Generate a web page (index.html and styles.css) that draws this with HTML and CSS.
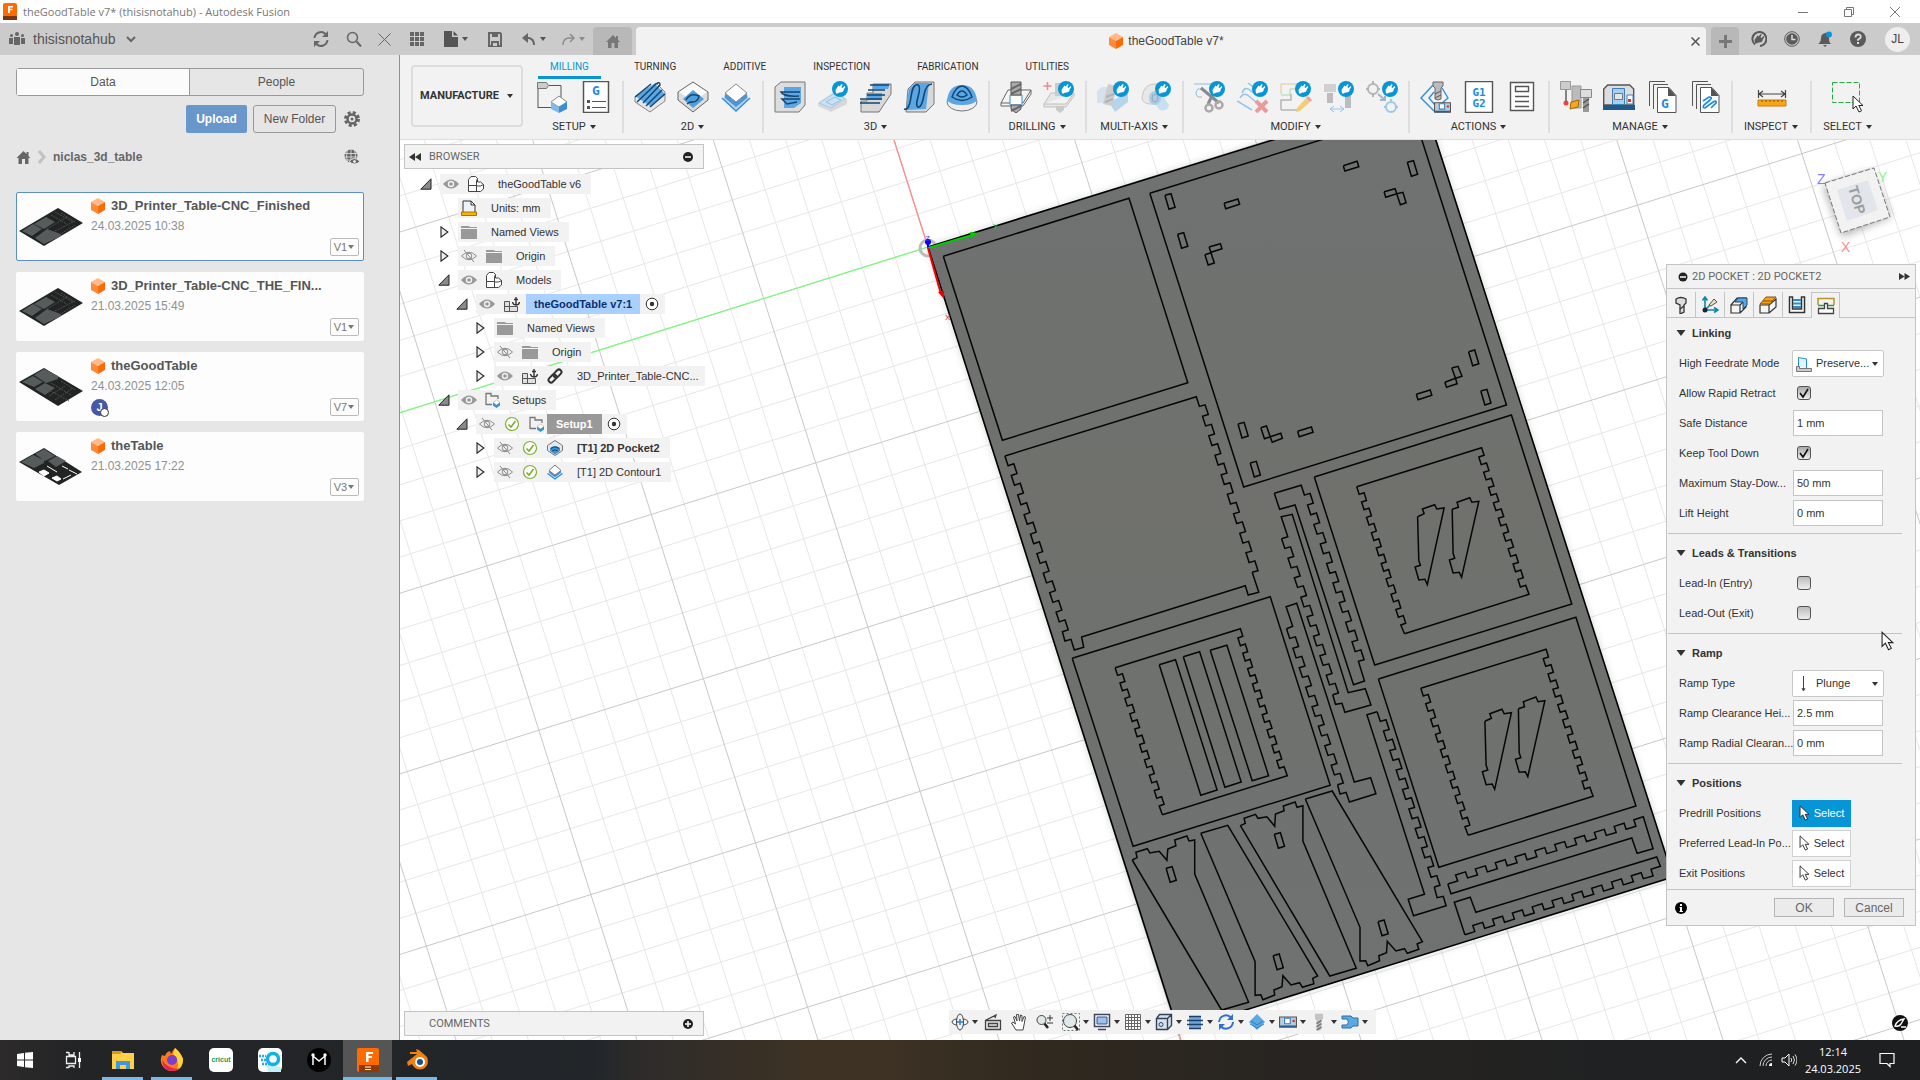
FILE: index.html
```html
<!DOCTYPE html>
<html lang="en">
<head>
<meta charset="utf-8">
<title>theGoodTable v7* (thisisnotahub) - Autodesk Fusion</title>
<link rel="stylesheet" href="styles.css">
</head>
<body>
<svg class="sprite" aria-hidden="true">
  <symbol id="cube" viewBox="0 0 14 16"><path d="M7 0 14 4 7 8 0 4z" fill="#ffb98a"/><path d="M0 4 7 8v8l-7-4z" fill="#ff8a3c"/><path d="M14 4 7 8v8l7-4z" fill="#ff6a00"/></symbol>
  <symbol id="caret" viewBox="0 0 8 8"><path d="M1 2h6L4 6z" fill="currentColor"/></symbol>
  <symbol id="house" viewBox="0 0 14 14"><path d="M7 1 0 8h2v6h3.500V9h3v5H12V8h2l-2-2V2h-2v2z" fill="currentColor"/></symbol>
  <symbol id="eye" viewBox="0 0 16 16"><path d="M0 8Q8-1 16 8 8 17 0 8z" fill="#999"/><circle cx="8" cy="8" r="3.200" fill="#f2f2f2"/><circle cx="8" cy="8" r="1.800" fill="#999"/></symbol>
  <symbol id="eyeoff" viewBox="0 0 16 16"><path d="M.5 8Q8 .5 15.500 8 8 15.500.5 8zM3 2l10 12" fill="none" stroke="#8a8a8a"/><circle cx="8" cy="8" r="2.800" fill="none" stroke="#8a8a8a"/></symbol>
  <symbol id="folder" viewBox="0 0 16 14"><path d="M0 1h8l1 1h7v12H0z" fill="#999"/><path d="M0 3.500h16" stroke="#f2f2f2"/></symbol>
  <symbol id="bodies" viewBox="0 0 16 16"><path d="M.5 15.500V3.500L3 .5h4.500l2 2V6h3L15.500 8.500V13l-3 2.500zM.5 9.500h8M8.500 15.500V5l1-2.500M8.500 10h4l3-1.500" fill="#fff" stroke="#444"/></symbol>
  <symbol id="anchored" viewBox="0 0 16 16"><path d="M.5 5.500h5v10h-5zM5.500 10.500h8v5h-8zM.5 10.500h5" fill="#e0e0e0" stroke="#555"/><path d="M12 1v8M8.500 6q.5 3 3.500 3t3.500-3M10 3.500h4" fill="none" stroke="#333" stroke-width="1.400"/></symbol>
  <symbol id="setup" viewBox="0 0 16 16"><path d="M1 13V1.500h5V4h7v3M1 12.500h6" fill="none" stroke="#777" stroke-width="1.300"/><path d="M11.500 8 15 10.500 11.500 13 8 10.500z" fill="#fff" stroke="#999" stroke-width=".5"/><path d="M8 10.500v3l3.500 2.500 3.500-2.500v-3L11.500 13z" fill="#3a8fd6"/></symbol>
  <symbol id="okay" viewBox="0 0 16 16"><circle cx="8" cy="8" r="6.500" fill="#fff" stroke="#7fae2e" stroke-width="1.200"/><path d="M4.500 8.500 7 11l4.500-6" fill="none" stroke="#7fae2e" stroke-width="1.600"/></symbol>
  <symbol id="closedtri" viewBox="0 0 12 14"><path d="M2.500 1 10.500 7l-8 6z" fill="#eee" stroke="#222" stroke-width="1.300"/></symbol>
  <symbol id="opentri" viewBox="0 0 12 12"><path d="M11 .8V11.200H.8z" fill="#8a8a8a" stroke="#222"/></symbol>
  <symbol id="radio" viewBox="0 0 14 14"><circle cx="7" cy="7" r="5.800" fill="#fff" stroke="#333"/><circle cx="7" cy="7" r="2.200" fill="#333"/></symbol>
  <symbol id="pocket" viewBox="0 0 32 32"><path d="M16 1 31 11v8L16 31 1 19v-8z" fill="#ddd" stroke="#666"/><path d="M16 2 30 11 16 21 2 11z" fill="#fafafa"/><path d="M6 18 16 9l11 9-11 9z" fill="#4f9fdd"/><path d="M9 19q4-8 13-4-1 7-9 6l-3 2" fill="none" stroke="#12466f" stroke-width="1.500"/></symbol>
  <symbol id="contour" viewBox="0 0 32 32"><path d="M4 14v4l12 11 12-11v-4L16 24z" fill="#b9cfe4"/><path d="M5 12v5l11 9 11-9v-5L16 21z" fill="#4a96d6"/><path d="M16 3 27 12 16 21 5 12z" fill="#fff" stroke="#888"/><path d="M2 17l14 13 14-13" fill="none" stroke="#2f8ee0" stroke-width="1.500"/></symbol>
  <symbol id="pocketsm" viewBox="0 0 16 16"><path d="M8 .5 15.500 5.500v5L8 15.500.5 10.500v-5z" fill="#e8e8e8" stroke="#777"/><path d="M3 8q5-4 10 0v3l-5 3.500L3 11z" fill="#3f93d8"/><path d="M4 8.500q4-3 8 0M5.500 11q2.500-2 5 0" fill="none" stroke="#12466f" stroke-width="1.200"/></symbol>
  <symbol id="contoursm" viewBox="0 0 16 16"><path d="M2 6v3l6 4.500L14 9V6l-6 5z" fill="#4a96d6"/><path d="M8 1 14 6.500 8 11 2 6.500z" fill="#fff" stroke="#777"/><path d="M.5 9.500 8 15l7.500-5.500" fill="none" stroke="#2f8ee0" stroke-width="1.400"/></symbol>
  <symbol id="plug" viewBox="0 0 16 16"><circle cx="8" cy="8" r="8" fill="#0696d7"/><path d="M4 12.500 3.500 9l3-4.500 1.200 1L9.500 3l1.200.8-1.300 2.400 1.300.8L12.500 5l.8 1-1.600 2.500q0 3-3.700 3-1.500 0-2.500 1z" fill="#fff"/></symbol>
  <symbol id="pointer" viewBox="0 0 12 18"><path d="M1 1v13l3-3 3 6 2.500-1.200L6.800 10.500H11z" fill="#fff" stroke="#222"/></symbol>
  <symbol id="machine" viewBox="0 0 16 11"><path d="M.5 1.500h15v9H.5z" fill="#b8cde0" stroke="#555"/><path d="M5 2.500h5v5H5z" fill="#fff" stroke="#3f7fb8"/><path d="M12 4h2v2h-2z" fill="#d33"/><path d="M1 9h14v1.500H1z" fill="#2c5d8a"/></symbol>
  <symbol id="drill" viewBox="0 0 10 22"><path d="M0 1h10v6l-2 2v11l-3 2-3-2V9L0 7z" fill="#c4c4c4"/><path d="M2 13l6-4M2 17l6-4M2 21l6-4" stroke="#777" stroke-width="2"/></symbol>
  <symbol id="sheet" viewBox="0 0 32 32"><path d="M3.500 25V.5H19M7.500 28V3.500H22" fill="none" stroke="#555"/><path d="M11.500 6.500H23l7 8v17H11.500z" fill="#fff" stroke="#555"/><path d="M22 6l8 9h-8z" fill="#555"/></symbol>
  <symbol id="boardleft" viewBox="0 0 68 67"><path d="M2 38 41 15l25 15-39 23z" fill="#222424"/><path d="M5 38l11-7 9 5-10 7zM17 31l12-7 9 5-11 7zM18 45l12-9 14 5v2L27 51z" fill="#565b5b"/><path d="M34 22l16 9M38 19l18 10M30 36l20-12M42 42l16-10M44 20l14 9M38 38l20-10" stroke="#4c5050" stroke-width="1" stroke-dasharray="2 1"/></symbol>
</svg>

<header class="titlebar">
  <svg class="appicon" viewBox="0 0 14 17"><rect width="14" height="17" rx="2" fill="#ff6b00"/><rect y="13" width="14" height="4" fill="#7a3510"/><path d="M5 10V3h5v1.500H6.800v1.300h2.700v1.500H6.800V10z" fill="#fff"/></svg>
  <h1>theGoodTable v7* (thisisnotahub) - Autodesk Fusion</h1>
  <div class="winbtns">
    <button aria-label="Minimize"><svg viewBox="0 0 10 10"><path d="M0 5.500h10"/></svg></button>
    <button aria-label="Restore"><svg viewBox="0 0 10 10"><path d="M.5 2.500h7v7h-7zM2.500 2.500v-2h7v7h-2"/></svg></button>
    <button aria-label="Close"><svg viewBox="0 0 10 10"><path d="M0 0l10 10M10 0 0 10"/></svg></button>
  </div>
</header>

<div class="appbar">
  <div class="hub">
    <button class="hubname"><svg width="16" height="14" viewBox="0 0 16 14"><g fill="#666"><circle cx="8" cy="2" r="2"/><path d="M5 5h6v8H5z"/><circle cx="2.500" cy="3.500" r="1.500"/><path d="M0 6h4v6H0z"/><circle cx="13.500" cy="3.500" r="1.500"/><path d="M12 6h4v6h-4z"/></g></svg><span>thisisnotahub</span><svg class="chev" width="10" height="8" viewBox="0 0 10 8"><path d="M1 2l4 4 4-4" fill="none" stroke="#666" stroke-width="2"/></svg></button>
    <button aria-label="Refresh"><svg width="18" height="18" viewBox="0 0 18 18"><path d="M2.500 8a6.500 6.500 0 0 1 11-4M15.500 10a6.500 6.500 0 0 1-11 4" fill="none" stroke="#666" stroke-width="2"/><path d="M16 1v6h-6zM2 17v-6h6z" fill="#666"/></svg></button>
    <button aria-label="Search"><svg width="16" height="16" viewBox="0 0 16 16"><path d="M10.500 10.500 15 15.500" stroke="#666" stroke-width="2"/><circle cx="6.500" cy="6.500" r="5" fill="none" stroke="#666" stroke-width="1.500"/></svg></button>
    <button aria-label="Close data panel"><svg width="13" height="13" viewBox="0 0 13 13"><path d="M.5.5l12 12M12.500.5l-12 12" stroke="#666"/></svg></button>
  </div>
  <div class="quick">
    <button aria-label="Show data panel"><svg width="14" height="14" viewBox="0 0 14 14"><path d="M0 0h4v4H0zM5 0h4v4H5zM10 0h4v4h-4zM0 5h4v4H0zM5 5h4v4H5zM10 5h4v4h-4zM0 10h4v4H0zM5 10h4v4H5zM10 10h4v4h-4z" fill="#666"/></svg></button>
    <button class="wide" aria-label="File"><svg width="14" height="16" viewBox="0 0 14 16"><path d="M0 0h8v6h6v10H0zM9.500 0 14 4.500H9.500z" fill="#555"/></svg><svg class="car"><use href="#caret"/></svg></button>
    <button aria-label="Save"><svg width="14" height="15" viewBox="0 0 14 15"><path d="M1 1h11l1 1v12H1z" fill="none" stroke="#666" stroke-width="2"/><path d="M4 1h6v4H4zM3 9h8v5H3z" fill="#666"/><path d="M5 11h4v3H5z" fill="#cbcbcb"/></svg></button>
    <button class="wide" aria-label="Undo"><svg width="14" height="14" viewBox="0 0 14 14"><path d="M2 6h5q5 1 5 7" fill="none" stroke="#666" stroke-width="2"/><path d="M0 6l6-5v10z" fill="#666"/></svg><svg class="car"><use href="#caret"/></svg></button>
    <button class="wide dim" aria-label="Redo"><svg width="14" height="14" viewBox="0 0 14 14"><path d="M12 6H7Q2 7 2 13" fill="none" stroke="#8c8c8c" stroke-width="1.500"/><path d="M9 2l4 4-4 4" fill="none" stroke="#8c8c8c" stroke-width="1.500"/></svg><svg class="car"><use href="#caret"/></svg></button>
  </div>
  <button class="hometab" aria-label="Home"><svg width="14" height="14"><use href="#house"/></svg></button>
  <div class="doctab"><span class="docname"><svg width="14" height="16"><use href="#cube"/></svg>theGoodTable v7*</span><button aria-label="Close document"><svg width="9" height="9" viewBox="0 0 9 9"><path d="M.5.5l8 8M8.500.5l-8 8" stroke="#555" stroke-width="1.500"/></svg></button></div>
  <button class="newtab" aria-label="New document"><svg width="13" height="13" viewBox="0 0 13 13"><path d="M6.500 0v13M0 6.500h13" stroke="#777" stroke-width="3"/></svg></button>
  <div class="account">
    <button aria-label="Extensions"><svg width="16" height="16" viewBox="0 0 16 16"><path d="M4 13.500A7 7 0 1 1 9 15" fill="none" stroke="#5a5a5a" stroke-width="2"/><path d="M4 12.500 3.500 9l3-4.500 1.200 1L9.500 3l1.200.8-1.300 2.400 1.300.8L12.500 5l.8 1-1.600 2.500q0 3-3.700 3-1.500 0-2.500 1z" fill="#5a5a5a"/></svg></button>
    <button aria-label="Job status"><svg width="16" height="16" viewBox="0 0 16 16"><circle cx="8" cy="8" r="7.300" fill="none" stroke="#5a5a5a"/><circle cx="8" cy="8" r="5.800" fill="#5a5a5a"/><path d="M8 4v4.500h3.500" fill="none" stroke="#ddd" stroke-width="1.500"/></svg></button>
    <button aria-label="Notifications"><svg width="16" height="16" viewBox="0 0 16 16"><path d="M1 13q3-2 3-6t4-5 4 5 3 6zM6 14h4l-2 2z" fill="#5a5a5a"/><circle cx="12" cy="3.500" r="3" fill="#0696d7"/></svg></button>
    <button aria-label="Help"><svg width="16" height="16" viewBox="0 0 16 16"><circle cx="8" cy="8" r="8" fill="#5a5a5a"/><path d="M5.500 6.500q0-3 2.700-3t2.600 2.300Q10.500 7.500 8 8.500v1.200" fill="none" stroke="#ddd" stroke-width="1.800"/><path d="M7 11h2v2H7z" fill="#ddd"/></svg></button>
    <button class="avatar">JL</button>
  </div>
</div>

<div class="main">
  <aside class="data">
    <div class="seg"><button class="on">Data</button><button>People</button></div>
    <div class="acts"><button class="upload">Upload</button><button class="newfolder">New Folder</button>
      <button class="bare" aria-label="Settings"><svg width="16" height="16" viewBox="0 0 16 16"><circle cx="8" cy="8" r="6.500" fill="none" stroke="#666" stroke-width="3" stroke-dasharray="3 2.100"/><circle cx="8" cy="8" r="4.500" fill="none" stroke="#666" stroke-width="2.500"/><circle cx="8" cy="8" r="1.500" fill="#666"/></svg></button></div>
    <div class="crumbs"><svg width="15" height="14"><use href="#house"/></svg><svg width="8" height="14" viewBox="0 0 8 14"><path d="M1 1l5 6-5 6" fill="none" stroke="#c2c2c2" stroke-width="3"/></svg><a href="#">niclas_3d_table</a>
      <button class="bare" aria-label="Open on the web"><svg width="16" height="16" viewBox="0 0 16 16"><circle cx="7" cy="7" r="6.500" fill="#666"/><path d="M0 4.500h14M0 8h14M0 11h14M7 0v14M3.500 0q-2 7 0 14M10.500 0q2 7 0 14" stroke="#e6e6e6" stroke-width=".8" fill="none"/><path d="M5 12.500q5.500-6 11 0-5.500 5-11 0z" fill="#666" stroke="#e6e6e6"/><circle cx="10.500" cy="12.500" r="1.300" fill="#fff"/></svg></button></div>
    <ul class="files">
      <li class="sel"><svg class="thumb"><use href="#boardleft"/></svg>
        <div class="info"><strong><svg width="14" height="16"><use href="#cube"/></svg>3D_Printer_Table-CNC_Finished</strong><time>24.03.2025 10:38</time></div><button class="ver">V1<svg class="car"><use href="#caret"/></svg></button></li>
      <li><svg class="thumb"><use href="#boardleft"/></svg>
        <div class="info"><strong><svg width="14" height="16"><use href="#cube"/></svg>3D_Printer_Table-CNC_THE_FIN...</strong><time>21.03.2025 15:49</time></div><button class="ver">V1<svg class="car"><use href="#caret"/></svg></button></li>
      <li><svg class="thumb" viewBox="0 0 68 67"><path d="M2 29 27 15l39 23-25 15z" fill="#222424"/><path d="M5 29l11-6 10 6-9 5zM17 22l10-6 14 7v3l-12 4zM18 36l10-6 10 5-10 7z" fill="#565b5b"/><path d="M32 43l16-10M38 47l18-12M34 30l20 12M44 28l14 9M30 36l22 12" stroke="#4c5050" stroke-width="1" stroke-dasharray="2 1"/></svg>
        <div class="info"><strong><svg width="14" height="16"><use href="#cube"/></svg>theGoodTable</strong><time>24.03.2025 12:05</time><span class="who">J</span></div><button class="ver">V7<svg class="car"><use href="#caret"/></svg></button></li>
      <li><svg class="thumb" viewBox="0 0 68 67"><path d="M2 29 27 15l38 24-23 13z" fill="#222424"/><path d="M4 29l12-7 11 5v3l-10 5zM18 21l9-5 11 7-10 5zM31 28l9-5 9 5-10 6z" fill="#565b5b"/><path d="M22 39l5-2 5 3-5 3zM35 45l5-2 4 3-4 2zM45 33l6 3M46 46l8-4" fill="#fff" stroke="#fff"/><path d="M30 33l10 6M52 37l8 4" stroke="#fff"/></svg>
        <div class="info"><strong><svg width="14" height="16"><use href="#cube"/></svg>theTable</strong><time>21.03.2025 17:22</time></div><button class="ver">V3<svg class="car"><use href="#caret"/></svg></button></li>
    </ul>
  </aside>

  <section class="work">
    <div class="ribbon">
      <button class="space">MANUFACTURE<svg class="car"><use href="#caret"/></svg></button>
      <div class="tools">
        <nav class="tabs"><a class="on" href="#">MILLING</a><a href="#">TURNING</a><a href="#">ADDITIVE</a><a href="#">INSPECTION</a><a href="#">FABRICATION</a><a href="#">UTILITIES</a></nav>
        <div class="groups">
          <div class="group"><div class="icons">
            <svg viewBox="0 0 32 32"><path d="M1 27V3M1 26.500h16M12 4.500h12V17" fill="none" stroke="#555"/><path d="M.5 1.500h9l2 3-2 3h-9z" fill="#ccc" stroke="#777"/><path d="M22 15l8 6-8 5-8-5z" fill="#fff" stroke="#888"/><path d="M14 21v7l8 4v-6z" fill="#7db9ea"/><path d="M30 21v7l-8 4v-6z" fill="#3c8fd4"/></svg>
            <svg viewBox="0 0 32 32"><path d="M3.500.5h25v31h-25z" fill="#fff" stroke="#555" stroke-width="1.500"/><path d="M7 19h3v3H7zM7 25h3v3H7z" fill="#555"/><path d="M12 20.500h14M12 26.500h14" stroke="#555"/><text x="16" y="14" class="gfont">G</text></svg>
          </div><button>SETUP<svg class="car"><use href="#caret"/></svg></button></div>
          <div class="group"><div class="icons">
            <svg viewBox="0 0 32 32"><path d="M1 16 22 2l9 9v9L16 31 1 21z" fill="#e6e6e6" stroke="#888"/><path d="M1 15 21 3l10 10-15 12z" fill="#5ba6e4"/><path d="M3 21 22 3q4-3 4 1L9 22M12 25 28 9M16 26 31 13M1 16 17 3" fill="none" stroke="#12466f" stroke-width="1.500"/></svg>
            <svg><use href="#pocket"/></svg><svg><use href="#contour"/></svg>
          </div><button>2D<svg class="car"><use href="#caret"/></svg></button></div>
          <div class="group"><div class="icons">
            <svg viewBox="0 0 32 32"><path d="M1 31V6l6-5h24v23l-6 7z" fill="#ddd" stroke="#777"/><path d="M10 6h17v16l-7 5H10z" fill="#5ba6e4"/><path d="M26 11H7q3 5 18 4M26 18H8l5 5 10-2" fill="none" stroke="#12466f" stroke-width="1.500"/></svg>
            <svg viewBox="0 0 32 32"><path d="M1 22 18 10l12 8v5L14 31 1 25z" fill="#d8d8d8"/><path d="M2 22 18 12l10 6-14 9z" fill="#c7e1f5" stroke="#a9c9e2"/><path d="M9 21l9-5 6 3-9 5z" fill="none" stroke="#9bbdd8"/><use href="#plug" x="15" width="16" height="16"/></svg>
            <svg viewBox="0 0 32 32"><path d="M1 31V20h6v-8h6V3h18v10l-12 18z" fill="#d8d8d8" stroke="#777"/><path d="M8 12h14v7H8zM13 3h17l-2 5H13z" fill="#5ba6e4"/><path d="M10 4h19M8 9h17M0 18h22M0 22h20M7 14h18" stroke="#12466f" stroke-width="1.600"/></svg>
            <svg viewBox="0 0 32 32"><path d="M3 31 5 8l7-7h19v22l-8 8z" fill="#d8d8d8" stroke="#777"/><path d="M3 29 6 8l6-6h14l-3 26z" fill="#5ba6e4"/><path d="M1 28q5 2 7-12T15 4q3 1 0 12t1 10q3-1 5-12t8-11" fill="none" stroke="#12466f" stroke-width="1.600"/></svg>
            <svg viewBox="0 0 32 32"><ellipse cx="16" cy="21" rx="15" ry="9" fill="#eee" stroke="#777"/><path d="M1 19Q3 4 16 4t15 15q-3 5-15 5T1 19z" fill="#5ba6e4"/><path d="M6 16q4-11 10-11t10 11q-10 7-20 0zM11 14q5-8 10 0-5 4-10 0z" fill="none" stroke="#12466f" stroke-width="1.500"/></svg>
          </div><button>3D<svg class="car"><use href="#caret"/></svg></button></div>
          <div class="group"><div class="icons">
            <svg viewBox="0 0 32 32"><path d="M1 22 8 9h23l-8 13zM1 22v3h22l8-12V9" fill="#f6f6f6" stroke="#666"/><path d="M10 14h12v10H10z" fill="#fff" stroke="#2f8ee0"/><path d="M11 1h10v13H11zM11 24h10v4l-5 4-5-4z" fill="#aaa" stroke="#555"/><path d="M11 8l10-5M11 13l10-5M11 30l10-5" stroke="#666" stroke-width="2"/></svg>
            <svg viewBox="0 0 32 32"><g opacity=".55"><path d="M1 23 8 12h23l-8 11zM1 23v3h22l8-11v-3" fill="#ddd" stroke="#999"/><path d="M12 2h8v13h-8zM13 25h8v4l-4 3-4-3z" fill="#aaa"/><path d="M4.500 1v8M.5 5h8" stroke="#e33" stroke-width="1.500"/></g><use href="#plug" x="15" width="16" height="16"/></svg>
          </div><button>DRILLING<svg class="car"><use href="#caret"/></svg></button></div>
          <div class="group"><div class="icons">
            <svg viewBox="0 0 32 32"><g opacity=".6"><path d="M0 10h12v12H0zM12 21l19-9v9L18 31z" fill="#8fc2e8"/><path d="M0 10l5-4h12l-5 16H0" fill="#c5d9e8"/><path d="M11 3l9 2-5 20-9-2z" fill="#b5b5b5"/><path d="M9 16l8-3M8 21l8-3" stroke="#888" stroke-width="2"/></g><use href="#plug" x="16" width="16" height="16"/></svg>
            <svg viewBox="0 0 32 32"><g opacity=".6"><path d="M2 16Q4 2 16 3l6 6-8 14Q2 24 2 16z" fill="#e2e2e2" stroke="#aaa"/><path d="M10 17 19 10l10 14q-1 7-9 5z" fill="#a9d3f3"/><ellipse cx="15" cy="17" rx="6" ry="7" fill="#7fb4dc"/><ellipse cx="15" cy="17" rx="3" ry="4" fill="none" stroke="#4f7590"/></g><use href="#plug" x="15" width="16" height="16"/></svg>
          </div><button>MULTI-AXIS<svg class="car"><use href="#caret"/></svg></button></div>
          <div class="group"><div class="icons">
            <svg viewBox="0 0 32 32"><path d="M0 3h18M8 8H4q-4 4 0 8h4" fill="none" stroke="#8cbfe6"/><path d="M7 7l18 15M20 11l-6 12" stroke="#8a8a8a" stroke-width="3"/><circle cx="15" cy="27" r="3.500" fill="none" stroke="#aaa" stroke-width="2.500"/><circle cx="25" cy="24" r="3.500" fill="none" stroke="#aaa" stroke-width="2.500"/><use href="#plug" x="15" width="16" height="16"/></svg>
            <svg viewBox="0 0 32 32"><path d="M11 2l12 9M5 12q3-8 9-2l5 4M0 20l15 9M3 17q4-7 10-1l6 5" fill="none" stroke="#94c3e6" stroke-width="1.500"/><path d="M19 20l11 11M30 20 19 31" stroke="#ea9a9a" stroke-width="4"/><use href="#plug" x="15" width="16" height="16"/></svg>
            <svg viewBox="0 0 32 32"><path d="M1 3h30M1 3v10" fill="none" stroke="#dcc98e"/><path d="M1 14h9V8h6" fill="none" stroke="#a0dcae"/><path d="M1 29V19h10v-6M1 29h16" fill="none" stroke="#b5b5b5" stroke-width="1.500"/><path d="M17 27 26 17l4 4-10 9-4 1z" fill="#f3cd7a"/><path d="M26 17l2-2 4 4-2 2z" fill="#ee9c9c"/><use href="#plug" x="15" width="16" height="16"/></svg>
            <svg viewBox="0 0 32 32"><g opacity=".6"><path d="M1 3h12v8H1z" fill="#bbb"/><path d="M4 12h6v10H4zM22 15h6v12h-6z" fill="#999"/><path d="M8 28h12M11 25l-4 3 4 3M17 25l4 3-4 3" fill="none" stroke="#5aa7df"/></g><use href="#plug" x="15" width="16" height="16"/></svg>
            <svg viewBox="0 0 32 32"><g fill="none" stroke-width="2"><circle cx="7" cy="8" r="5" stroke="#b5b5b5"/><path d="M7 0v3M7 13v3M0 8h2M12 8h2" stroke="#b5b5b5"/><circle cx="25" cy="26" r="5" stroke="#9cc9e8"/><path d="M25 18v3M18 26h2M30 26h2" stroke="#9cc9e8"/><path d="M12 13l7 6m0-4v4h-5" stroke="#a5b5c0"/></g><use href="#plug" x="16" width="16" height="16"/></svg>
          </div><button>MODIFY<svg class="car"><use href="#caret"/></svg></button></div>
          <div class="group"><div class="icons">
            <svg viewBox="0 0 32 32"><path d="M13 4 1 17l13 13M14 11l-5 6 6 7M22 7l6 10-6 5" fill="none" stroke="#2f8ee0" stroke-width="1.400"/><path d="M13 1h10v4l-2 2v11l-3 1-3-1V7l-2-2z" fill="#bbb" stroke="#666"/><path d="M15 13l6-3M15 17l6-3" stroke="#555"/><use href="#machine" x="14" y="20" width="17" height="12"/></svg>
            <svg viewBox="0 0 32 32"><path d="M2.500.5h27v31h-27z" fill="#fff" stroke="#555" stroke-width="1.400"/><text x="16" y="15" class="gfont small">G1</text><text x="16" y="26" class="gfont small">G2</text></svg>
            <svg viewBox="0 0 32 32"><path d="M4.500 1.500h23v28h-23z" fill="#fff" stroke="#555" stroke-width="1.400"/><path d="M9.500 5.500h13v5h-13zM9 15.500h14M9 20.500h14M9 25.500h14" fill="none" stroke="#555" stroke-width="1.400"/></svg>
          </div><button>ACTIONS<svg class="car"><use href="#caret"/></svg></button></div>
          <div class="group"><div class="icons">
            <svg viewBox="0 0 32 32"><path d="M12 5h9v22h-9z" fill="#bbb" stroke="#999"/><path d="M.5.5h10v8H.5z" fill="#ccc" stroke="#999"/><path d="M6 9v12" stroke="#555" stroke-width="1.400"/><circle cx="6" cy="22" r="2.500" fill="#f04040"/><path d="M11 21l8-2-1 7-8 2z" fill="#f3a81d" stroke="#a06800"/><path d="M20.500 8.500h11v8h-11z" fill="#ddd" stroke="#888"/><path d="M23 17h6v14h-6z" fill="#999"/><path d="M23 22l6-4M23 27l6-4" stroke="#555" stroke-width="1.500"/></svg>
            <svg viewBox="0 0 32 32"><path d="M.7 24V8l4-4h22l4 4v16z" fill="#ddd" stroke="#555" stroke-width="1.400"/><path d="M0 24h32v5H0z" fill="#1f5a89"/><path d="M9.500 7.500h12v16h-12z" fill="#a8cff0" stroke="#3c80bd"/><path d="M11.500 12.500h8v6h-8z" fill="#e6e6e6" stroke="#777"/><path d="M24 14h6v9h-6z" fill="#fff" stroke="#3c80bd"/><path d="M25 18h3v3h-3z" fill="#d33"/></svg>
            <svg viewBox="0 0 32 32"><use href="#sheet" width="32" height="32"/><text x="19" y="27" class="gfont">G</text></svg>
            <svg viewBox="0 0 32 32"><use href="#sheet" width="32" height="32"/><path d="M14 20l6-4q4 0 1 3l-6 5q-2 3 1 3l8-6q4-2 3 1l-5 5" fill="none" stroke="#1b8be6" stroke-width="1.700"/></svg>
          </div><button>MANAGE<svg class="car"><use href="#caret"/></svg></button></div>
          <div class="group"><div class="icons">
            <svg viewBox="0 0 32 32"><path d="M2.500 9v8M29.500 9v8M3 13h26M7 10l-4 3 4 3M25 10l4 3-4 3" fill="none" stroke="#444" stroke-width="1.200"/><path d="M2 19h28v6H2z" fill="#f9a71a" stroke="#c97c00"/><path d="M6 19v2M10 19v2M14 19v2M18 19v2M22 19v2M26 19v2" stroke="#8a5200"/></svg>
          </div><button>INSPECT<svg class="car"><use href="#caret"/></svg></button></div>
          <div class="group last"><div class="icons">
            <svg viewBox="0 0 32 32"><path d="M.5 1.500h27v20H.5z" fill="none" stroke="#27a844" stroke-dasharray="5 2"/><use href="#pointer" x="20" y="14" width="12" height="18"/></svg>
          </div><button>SELECT<svg class="car"><use href="#caret"/></svg></button></div>
        </div>
      </div>
    </div>

    <div class="canvas">
      <svg class="scene" viewBox="400 140 1520 900" preserveAspectRatio="xMinYMin slice">
        <defs><linearGradient id="plate" x1="0" y1="0" x2="0" y2="1"><stop offset="0" stop-color="#6f7272"/><stop offset=".45" stop-color="#70716d"/><stop offset=".6" stop-color="#6f716f"/><stop offset="1" stop-color="#707272"/></linearGradient>
        <filter id="soft"><feGaussianBlur stdDeviation="4"/></filter></defs>
        <g id="grid"></g>
        <path d="M400 412.600 928 247" stroke="#7dfb7d" stroke-width="1.300"/><path d="M894 140 928 247M1178 1031l3 9" stroke="#ff8a8a" stroke-width="1.300"/>
        <path d="M928 247 1421 94 1673 877 1178 1031z" fill="#000" opacity=".18" filter="url(#soft)"/>
        <circle cx="928" cy="248" r="8" fill="none" stroke="#bbb" stroke-width="3"/>
        <path d="M928 247 1421 94 1673 877 1178 1031z" fill="url(#plate)" stroke="#000" stroke-width="1.600"/>
        <g id="parts"></g>
        <path d="M928 248 976 234" stroke="#0c0" stroke-width="2"/><path d="M970 232l9 1-8 5z" fill="#0c0"/>
        <path d="M928 248l13 46" stroke="#e00" stroke-width="2"/><path d="M938 292l6-1 0 8z" fill="#e00"/>
        <path d="M928 247v-7" stroke="#00f" stroke-width="2"/><circle cx="928" cy="242" r="3" fill="#00f"/>
        <text x="925" y="241" class="ax" fill="#33f">Z</text><text x="993" y="229" class="ax" fill="#2c2">Y</text><text x="945" y="320" class="ax" fill="#a33">X</text>
        <path d="M1823 186l49-15 19 46-49 20z" fill="#000" opacity=".3" filter="url(#soft)"/>
        <path d="M1825 183l49-15 16 49-49 16z" fill="#f2f2f2" stroke="#777" stroke-dasharray="5 2"/><path d="M1837 190l31-10 10 30-31 11z" fill="#e2e5e9"/>
        <text x="1857" y="205" class="top" transform="rotate(73 1857 200)">TOP</text>
        <text x="1817" y="184" class="cubeax" fill="#8080ff">Z</text><text x="1878" y="182" class="cubeax" fill="#8cf58c">Y</text><text x="1841" y="252" class="cubeax" fill="#ff8c8c">X</text>
      </svg>

      <div class="browser">
        <div class="bar"><svg width="12" height="8" viewBox="0 0 12 8"><path d="M6 0v8L0 4zM12 0v8L6 4z" fill="#333"/></svg><h2>BROWSER</h2><svg width="10" height="10" viewBox="0 0 10 10"><circle cx="5" cy="5" r="5" fill="#222"/><path d="M2 5h6" stroke="#fff" stroke-width="1.500"/></svg></div>
        <ul class="tree">
          <li class="l0"><svg class="tg"><use href="#opentri"/></svg><span class="it"><svg><use href="#eye"/></svg><svg><use href="#bodies"/></svg><b>theGoodTable v6</b></span></li>
          <li class="l1"><svg class="tg"></svg><span class="it"><svg viewBox="0 0 16 16"><path d="M2 1h8l4 4v9H2z" fill="#eef3f8" stroke="#333"/><path d="M10 1v4h4" fill="none" stroke="#333"/><path d="M.5 12h15v3.500H.5z" fill="#f7b500" stroke="#a87400"/></svg><b>Units: mm</b></span></li>
          <li class="l1"><svg class="tg"><use href="#closedtri"/></svg><span class="it"><svg><use href="#folder"/></svg><b>Named Views</b></span></li>
          <li class="l1"><svg class="tg"><use href="#closedtri"/></svg><span class="it"><svg><use href="#eyeoff"/></svg><svg><use href="#folder"/></svg><b>Origin</b></span></li>
          <li class="l1"><svg class="tg"><use href="#opentri"/></svg><span class="it"><svg><use href="#eye"/></svg><svg><use href="#bodies"/></svg><b>Models</b></span></li>
          <li class="l2"><svg class="tg"><use href="#opentri"/></svg><span class="it act"><svg><use href="#eye"/></svg><svg><use href="#anchored"/></svg><b class="blue">theGoodTable v7:1</b><svg class="rd"><use href="#radio"/></svg></span></li>
          <li class="l3"><svg class="tg"><use href="#closedtri"/></svg><span class="it"><svg><use href="#folder"/></svg><b>Named Views</b></span></li>
          <li class="l3"><svg class="tg"><use href="#closedtri"/></svg><span class="it"><svg><use href="#eyeoff"/></svg><svg><use href="#folder"/></svg><b>Origin</b></span></li>
          <li class="l3"><svg class="tg"><use href="#closedtri"/></svg><span class="it act"><svg><use href="#eye"/></svg><svg><use href="#anchored"/></svg><svg viewBox="0 0 16 16"><g fill="none" stroke="#333" stroke-width="2"><rect x="1" y="8" width="9" height="5" rx="2.500" transform="rotate(-45 5.500 10.500)"/><rect x="6" y="3" width="9" height="5" rx="2.500" transform="rotate(-45 10.500 5.500)"/></g></svg><b>3D_Printer_Table-CNC...</b></span></li>
          <li class="l1"><svg class="tg"><use href="#opentri"/></svg><span class="it setups"><svg><use href="#eye"/></svg><svg><use href="#setup"/></svg><b>Setups</b></span></li>
          <li class="l2"><svg class="tg"><use href="#opentri"/></svg><span class="it act"><svg><use href="#eyeoff"/></svg><svg><use href="#okay"/></svg><svg><use href="#setup"/></svg><b class="gray">Setup1</b><svg class="rd"><use href="#radio"/></svg></span></li>
          <li class="l3"><svg class="tg"><use href="#closedtri"/></svg><span class="it"><svg><use href="#eyeoff"/></svg><svg><use href="#okay"/></svg><svg><use href="#pocketsm"/></svg><b class="strong">[T1] 2D Pocket2</b></span></li>
          <li class="l3"><svg class="tg"><use href="#closedtri"/></svg><span class="it"><svg><use href="#eyeoff"/></svg><svg><use href="#okay"/></svg><svg><use href="#contoursm"/></svg><b>[T1] 2D Contour1</b></span></li>
        </ul>
      </div>

      <div class="comments"><h2>COMMENTS</h2><svg width="10" height="10" viewBox="0 0 10 10"><circle cx="5" cy="5" r="5" fill="#222"/><path d="M2 5h6M5 2v6" stroke="#fff" stroke-width="1.500"/></svg></div>

      <div class="navbar">
        <button aria-label="Orbit"><svg viewBox="0 0 18 18"><ellipse cx="9" cy="9" rx="8" ry="3.500" fill="none" stroke="#444"/><ellipse cx="9" cy="9" rx="3.500" ry="8" fill="#f2f2f2" stroke="#444"/><path d="M9 6v6M6 9h6" stroke="#2c7fd0" stroke-width="1.500"/></svg><svg class="car"><use href="#caret"/></svg></button>
        <button class="plain" aria-label="Look at"><svg viewBox="0 0 18 18"><path d="M1.500 7.500h15v9h-15zM4.500 10.500h9v3h-9zM2 7l10-5-1 3" fill="#e5e5e5" stroke="#444" stroke-width="1.300"/></svg></button>
        <button class="plain" aria-label="Pan"><svg viewBox="0 0 18 18"><path d="M6 17 1.500 10l1.500-1 2.500 2L3.500 4 5 3.500 7 8 6.500 1.500h2L9.500 8l1-6 1.500.5L12 8.500l2-5 1.500.5L14 12l-1 5z" fill="#fff" stroke="#444"/></svg></button>
        <button class="plain" aria-label="Zoom"><svg viewBox="0 0 18 18"><path d="M8 10 12 15" stroke="#222" stroke-width="2.500"/><circle cx="5.500" cy="7" r="4.500" fill="#dfe9ea" stroke="#444"/><path d="M11 5h6M14 2v6M11 10h6" stroke="#333"/></svg></button>
        <button aria-label="Fit"><svg viewBox="0 0 18 18"><path d="M.5.5h17v17H.5z" fill="none" stroke="#777" stroke-dasharray="2 2"/><path d="M12 12l4 5" stroke="#222" stroke-width="2.500"/><circle cx="8" cy="8" r="6.500" fill="#dfe9ea" stroke="#444"/></svg><svg class="car"><use href="#caret"/></svg></button>
        <button aria-label="Display"><svg viewBox="0 0 18 18"><path d="M1.500 1.500h15v12h-15zM5 16.500h8" fill="#fff" stroke="#445" stroke-width="1.500"/><path d="M4 4h10v7H4z" fill="#9fc0ea" stroke="#2c55a0"/></svg><svg class="car"><use href="#caret"/></svg></button>
        <button aria-label="Grid"><svg viewBox="0 0 18 18"><path d="M1.500 1.500h15v15h-15zM4.500 1v16M7.500 1v16M10.500 1v16M13.500 1v16M1 4.500h16M1 7.500h16M1 10.500h16M1 13.500h16" fill="#fff" stroke="#666"/></svg><svg class="car"><use href="#caret"/></svg></button>
        <button aria-label="Viewports"><svg viewBox="0 0 18 18"><path d="M1.500 5.500l3-4h12v11l-4 4h-11zM1.500 5.500h11v11M12.500 5.500l4-4" fill="#d5e2f0" stroke="#345" stroke-width="1.400"/><circle cx="6" cy="11.500" r="2" fill="none" stroke="#345"/></svg><svg class="car"><use href="#caret"/></svg></button>
        <button aria-label="Layers"><svg viewBox="0 0 18 18"><path d="M3 3h12v12H3z" fill="#6ea8dc"/><path d="M3 3.500h12M1 7.500h16M1 11.500h16M3 15.500h12" stroke="#1f3f66" stroke-width="1.300"/></svg><svg class="car"><use href="#caret"/></svg></button>
        <button aria-label="Regenerate"><svg viewBox="0 0 18 18"><path d="M2 9a7 7 0 0 1 12-4.500M16 9a7 7 0 0 1-12 4.500" fill="none" stroke="#2f6fd0" stroke-width="2"/><path d="M16 1v6h-6zM2 17v-6h6z" fill="#2f6fd0"/></svg><svg class="car"><use href="#caret"/></svg></button>
        <button aria-label="Toolpaths"><svg viewBox="0 0 18 18"><path d="M9 1l8 8-8 8-8-8z" fill="#5aa9e2"/><path d="M2 11l7 4 7-4M3 8l6 4 6-4" fill="none" stroke="#2b7fc0"/></svg><svg class="car"><use href="#caret"/></svg></button>
        <button aria-label="Machine"><svg viewBox="0 0 18 18"><use href="#machine" y="2" width="18" height="13"/></svg><svg class="car"><use href="#caret"/></svg></button>
        <button aria-label="Tool"><svg viewBox="0 0 18 18"><use href="#drill" x="4" width="10" height="18"/></svg><svg class="car"><use href="#caret"/></svg></button>
        <button aria-label="Stock"><svg viewBox="0 0 18 18"><path d="M1 3h9l2 2h5v8h-5l-2 2H1v-3h5q3-3 0-6H1z" fill="#5aa9e2" stroke="#2b6fa8"/></svg><svg class="car"><use href="#caret"/></svg></button>
      </div>

      <form class="dialog">
        <div class="dhead"><svg width="10" height="10" viewBox="0 0 10 10"><circle cx="5" cy="5" r="4.500" fill="#222"/><path d="M2 5h6" stroke="#fff" stroke-width="1.500"/></svg><h2>2D POCKET : 2D POCKET2</h2><svg width="11" height="7" viewBox="0 0 11 7"><path d="M0 0v7l5.500-3.500zM5.500 0v7L11 3.500z" fill="#333"/></svg></div>
        <div class="dtabs">
          <button type="button" aria-label="Tool"><svg viewBox="0 0 18 18"><path d="M4 3q5-3 10 0v4l-2 2v7l-4 2V9L4 7z" fill="#ddd" stroke="#333" stroke-width="1.300"/><path d="M8 13l4-3" stroke="#333" stroke-width="1.500"/></svg></button>
          <button type="button" aria-label="Geometry"><svg viewBox="0 0 18 18"><path d="M4 14V2M1.500 4.500 4 1l2.500 3.500M4 14h12M13 11.500l4 2.500-4 2.500M4 14l5-5" fill="none" stroke="#0b86a8" stroke-width="1.600"/><circle cx="4" cy="14" r="2.500" fill="#223"/><path d="M8 9l5-6 3 3-6 4z" fill="#eadfc4" stroke="#554"/></svg></button>
          <button type="button" aria-label="Heights"><svg viewBox="0 0 18 18"><path d="M1 9h9v8H1zM10 9l6-6v8l-6 6M1 9l6-7h9l-1 3" fill="#f5f5f5" stroke="#333" stroke-width="1.200"/><path d="M8 2h9v7l-4 4V6H5z" fill="#5ba6e4" stroke="#246"/></svg></button>
          <button type="button" aria-label="Passes"><svg viewBox="0 0 18 18"><path d="M1 9h9v8H1zM10 9l7-6v8l-7 6" fill="#f5f5f5" stroke="#333" stroke-width="1.200"/><path d="M1 8l6-7h10l-6 7z" fill="#f4a11d" stroke="#8a5200"/><path d="M4 5h10" stroke="#8a5200"/></svg></button>
          <button type="button" aria-label="Multiple depths"><svg viewBox="0 0 18 18"><path d="M1.500 1v15.500h15V1h-3v12h-9V1z" fill="#fff" stroke="#333" stroke-width="1.500"/><path d="M5 4h8M5 7.500h8M5 11h8" stroke="#2f8ed0" stroke-width="2"/></svg></button>
          <button type="button" aria-label="Linking" class="on"><svg viewBox="0 0 18 18"><path d="M1 8V1.500h16V8" fill="none" stroke="#b5952a" stroke-width="1.500"/><path d="M1 8.500h6M11 8.500h6" stroke="#2c9e4f" stroke-width="1.500"/><path d="M1.500 11.500h6v-5h3v5h6v5h-15z" fill="#fff" stroke="#444" stroke-width="1.300"/></svg></button>
        </div>
        <section>
          <h3><svg class="car"><use href="#caret"/></svg>Linking</h3>
          <div class="row"><label for="hf">High Feedrate Mode</label><span class="pick"><svg class="pic" viewBox="0 0 16 16"><path d="M2.500 11V1.500l8 1.500V12" fill="#e6f3fd" stroke="#1b8be6"/><path d="M.5 15.500v-5h3v2h12v3z" fill="#ccc" stroke="#777"/></svg><select id="hf"><option>Preserve...</option></select><svg class="car"><use href="#caret"/></svg></span></div>
          <div class="row"><label for="rr">Allow Rapid Retract</label><input type="checkbox" id="rr" checked></div>
          <div class="row"><label for="sd">Safe Distance</label><input type="text" id="sd" value="1 mm"></div>
          <div class="row"><label for="kt">Keep Tool Down</label><input type="checkbox" id="kt" checked></div>
          <div class="row"><label for="ms">Maximum Stay-Dow...</label><input type="text" id="ms" value="50 mm"></div>
          <div class="row"><label for="lh">Lift Height</label><input type="text" id="lh" value="0 mm"></div>
        </section>
        <section>
          <h3><svg class="car"><use href="#caret"/></svg>Leads &amp; Transitions</h3>
          <div class="row"><label for="li">Lead-In (Entry)</label><input type="checkbox" id="li"></div>
          <div class="row"><label for="lo">Lead-Out (Exit)</label><input type="checkbox" id="lo"></div>
        </section>
        <section>
          <h3><svg class="car"><use href="#caret"/></svg>Ramp</h3>
          <div class="row"><label for="rt">Ramp Type</label><span class="pick"><svg class="pic" viewBox="0 0 16 16"><path d="M7.500 0v15M6 12l1.500 3L9 12" fill="none" stroke="#444"/></svg><select id="rt"><option>Plunge</option></select><svg class="car"><use href="#caret"/></svg></span></div>
          <div class="row"><label for="rc">Ramp Clearance Hei...</label><input type="text" id="rc" value="2.5 mm"></div>
          <div class="row"><label for="rx">Ramp Radial Clearan...</label><input type="text" id="rx" value="0 mm"></div>
        </section>
        <section>
          <h3><svg class="car"><use href="#caret"/></svg>Positions</h3>
          <div class="row"><label for="p1">Predrill Positions</label><button type="button" id="p1" class="pickbtn on"><svg width="11" height="16"><use href="#pointer"/></svg>Select</button></div>
          <div class="row"><label for="p2">Preferred Lead-In Po...</label><button type="button" id="p2" class="pickbtn"><svg width="11" height="16"><use href="#pointer"/></svg>Select</button></div>
          <div class="row"><label for="p3">Exit Positions</label><button type="button" id="p3" class="pickbtn"><svg width="11" height="16"><use href="#pointer"/></svg>Select</button></div>
        </section>
        <div class="dfoot"><svg width="12" height="12" viewBox="0 0 12 12"><circle cx="6" cy="6" r="6" fill="#000"/><path d="M5 2h2v2H5zM4.500 5H7v4h1v1H4.500V9H5V6h-.5z" fill="#fff"/></svg><button type="button">OK</button><button type="button">Cancel</button></div>
      </form>
      <svg class="badge" width="16" height="16" viewBox="0 0 16 16"><circle cx="8" cy="8" r="8" fill="#111"/><path d="M3 11q2-6 9-7l-3 5q-2 3-6 2zM9 12h5" fill="none" stroke="#fff" stroke-width="1.400"/></svg>
      <svg class="mouse" width="13" height="20"><use href="#pointer"/></svg>
    </div>
  </section>
</div>

<footer class="taskbar">
  <button aria-label="Start"><svg viewBox="0 0 24 24"><path d="M4 6l7-1v6.500H4zM12 4.800 20 4v7.500h-8zM4 12.500h7V19l-7-1zM12 12.500h8V20l-8-.8z" fill="#fff"/></svg></button>
  <button aria-label="Task view"><svg viewBox="0 0 24 24"><path d="M4.500 8.500h9v7h-9zM4 4.500h3M4 19.500h3M7 4v3h5V4M7 20v-2h5v2M17.500 4v16" fill="none" stroke="#eee" stroke-width="1.300"/><path d="M16 10h3v4h-3z" fill="#fff"/></svg></button>
  <button class="run" aria-label="File Explorer"><svg viewBox="0 0 24 24"><path d="M1 3h9l2 2h11v16H1z" fill="#ffcf48"/><path d="M1 3h9v3H1z" fill="#d99a1c"/><path d="M5 21v-8h14v8h-4v-4H9v4z" fill="#3f97dd"/></svg></button>
  <button class="run" aria-label="Firefox"><svg viewBox="0 0 24 24"><path d="M12 23a11 11 0 0 1-10-16l3 1q1-4 5-5l1 3q2-4 4-6 6 5 8 11 0 12-11 12z" fill="#ff7a1a"/><path d="M15 0q6 5 8 11 0 8-6 11 3-12-4-16z" fill="#ffd43a"/><path d="M2 12q1 11 10 11 5 0 8-3-10 3-18-8z" fill="#e8255b"/><circle cx="12" cy="12" r="5" fill="#7a3fd0"/></svg></button>
  <button aria-label="Cricut"><svg viewBox="0 0 24 24"><rect width="24" height="24" rx="5" fill="#fff"/><text x="12" y="14" class="cricut">cricut</text></svg></button>
  <button aria-label="Studio"><svg viewBox="0 0 24 24"><rect width="24" height="24" rx="5" fill="#fff"/><path d="M8 17l15 2v5H10z" fill="#c3f1fb"/><circle cx="15" cy="11" r="5.500" fill="none" stroke="#0db5e6" stroke-width="3.500"/><path d="M1 8h7M3 12h8M4 16h9" stroke="#27a9e8" stroke-width="2.500" stroke-dasharray="2 1"/></svg></button>
  <button aria-label="Maker"><svg viewBox="0 0 24 24"><circle cx="12" cy="12" r="12" fill="#000"/><path d="M6 17V8l6 5 6-5v9" fill="none" stroke="#fff" stroke-width="1.500"/><circle cx="6" cy="7" r="1.700" fill="#fff"/><circle cx="18" cy="7" r="1.700" fill="#fff"/></svg></button>
  <button class="run cur" aria-label="Fusion"><svg viewBox="0 0 24 24"><rect x="1" width="22" height="24" rx="2" fill="#ff6b00"/><path d="M3 17h20v7H3z" fill="#8f3a00"/><path d="M10 14V4h7v2h-4.500v2H16v2h-3.500v4z" fill="#fff"/><path d="M9 19h6M9 21.500h6" stroke="#fff"/></svg></button>
  <button class="run" aria-label="Blender"><svg viewBox="0 0 24 24"><path d="M2 14 12 6H5V4h7l-1-3 3 1 8 7q3 8-4 12-8 2-11-5l-4 2z" fill="#f08010"/><circle cx="15" cy="14" r="5" fill="#fff"/><circle cx="15" cy="14" r="3" fill="#1d4f8c"/></svg></button>
  <div class="tray">
    <svg width="12" height="8" viewBox="0 0 12 8"><path d="M1 7l5-5 5 5" fill="none" stroke="#fff" stroke-width="1.300"/></svg>
    <svg width="14" height="14" viewBox="0 0 14 14"><path d="M1 13A12 12 0 0 1 13 1M4 13a9 9 0 0 1 9-9M7 13a6 6 0 0 1 6-6" fill="none" stroke="#ccc"/><path d="M10 13a3 3 0 0 1 3-3v3z" fill="#fff"/></svg>
    <svg width="16" height="14" viewBox="0 0 16 14"><path d="M1 5h3l4-4v12L4 9H1z" fill="none" stroke="#fff"/><path d="M10 5q1.500 2 0 4M12 3q3 4 0 8M14 1.500q4 5.500 0 11" fill="none" stroke="#ddd"/></svg>
    <time>12:14<br>24.03.2025</time>
    <svg width="16" height="16" viewBox="0 0 16 16"><path d="M1 1.500h14v10h-4v3l-3-3H1z" fill="none" stroke="#fff" stroke-width="1.200"/></svg>
  </div>
</footer>
<script src="board.js"></script>
</body>
</html>
```

FILE: styles.css
```css
* { box-sizing: border-box; }
body { margin: 0; height: 100vh; display: flex; flex-direction: column; overflow: hidden; font: 11px/16px "Liberation Sans", Arial, sans-serif; color: #333; background: #fff; }
button { font: inherit; color: inherit; border: 0; background: none; padding: 0; display: flex; align-items: center; justify-content: center; }
h1, h2, h3, ul { margin: 0; padding: 0; font: inherit; list-style: none; }
a { color: inherit; text-decoration: none; }
svg { flex: none; display: block; }
.sprite { position: absolute; width: 0; height: 0; }
.car { width: 8px; height: 8px; }

.titlebar { flex: none; height: 23px; display: flex; align-items: center; gap: 6px; padding: 0 2px 0 3px; font: 11px/22px "Open Sans", sans-serif; color: #777; }
.appicon { width: 14px; height: 17px; }
.titlebar h1 { flex: 1; }
.winbtns { display: flex; }
.winbtns button { width: 46px; height: 20px; }
.winbtns svg { width: 10px; height: 10px; fill: none; stroke: #777; }

.appbar { flex: none; height: 32px; display: flex; background: #cbcbcb; padding-right: 10px; }
.hub { width: 400px; display: flex; align-items: center; gap: 16px; padding: 0 9px; }
.hubname { margin-right: auto; gap: 8px; font-size: 14px; color: #555; }
.hubname .chev { margin-left: 2px; }
.quick { width: 193px; display: flex; align-items: center; gap: 12px; padding-left: 6px; color: #555; }
.quick button { flex: none; gap: 3px; width: 22px; }
.quick .wide { width: 32px; }
.quick .dim { margin-left: -5px; color: #8c8c8c; }
.hometab { width: 39px; margin-top: 4px; background: #b8b8b8; border-radius: 4px 4px 0 0; color: #777; }
.doctab { flex: 1; display: flex; align-items: center; margin: 4px 5px 0 4px; padding: 0 6px; background: #f2f2f2; border-radius: 4px 4px 0 0; font-size: 12px; color: #444; }
.docname { flex: 1; display: flex; justify-content: center; align-items: center; gap: 5px; }
.newtab { width: 28px; margin-top: 4px; background: #b8b8b8; border-radius: 4px 4px 0 0; }
.account { display: flex; align-items: center; gap: 17px; padding-left: 12px; }
.avatar { width: 25px; height: 25px; margin-left: 2px; border-radius: 50%; background: #eee; font-size: 12px; color: #444; }

.main { flex: 1; min-height: 0; display: flex; }
.data { flex: none; width: 400px; padding: 13px 35px 0 16px; background: #e6e6e6; border-right: 1px solid #909090; color: #555; font-size: 12px; }
.seg { display: flex; height: 28px; border: 1px solid #999; border-radius: 3px; }
.seg button { flex: 1; }
.seg .on { flex: none; width: 50%; background: #fbfbfb; border-right: 1px solid #999; }
.acts { display: flex; justify-content: flex-end; align-items: center; gap: 6px; margin-top: 9px; padding-right: 4px; }
.upload { width: 61px; height: 28px; background: #6996cb; border-radius: 2px; color: #fff; font-weight: bold; }
.newfolder { width: 83px; height: 28px; border: 1px solid #999; border-radius: 3px; }
.acts .bare { margin-left: 2px; }
.crumbs { display: flex; align-items: center; gap: 7px; height: 20px; margin-top: 14px; padding-right: 4px; font-weight: bold; color: #666; }
.crumbs a { flex: 1; }
.files { margin: 25px 0 0; }
.files li { display: flex; height: 69px; margin-bottom: 11px; background: #fdfdfd; border: 1px solid #fdfdfd; border-radius: 2px; }
.files .sel { border-color: #5b8dc9; }
.thumb { width: 68px; height: 67px; }
.info { flex: 1; padding: 4px 0 0 6px; }
.info strong { display: flex; align-items: center; gap: 6px; height: 18px; font-size: 13px; color: #555; white-space: nowrap; }
.info time { display: block; line-height: 22px; color: #909090; }
.who { display: block; position: relative; width: 17px; height: 17px; margin-top: 2px; border-radius: 50%; background: #4758a8; color: #fff; font: bold 11px/17px "Liberation Sans", sans-serif; text-align: center; }
.who::after { content: ""; position: absolute; right: -1px; bottom: -1px; width: 7px; height: 7px; border: 1px solid #333; border-radius: 50%; background: #fff; }
.ver { align-self: flex-end; width: 29px; height: 18px; margin: 0 4px 4px 0; border: 1px solid #bbb; border-radius: 2px; font-size: 11px; color: #777; }

.work { flex: 1; min-width: 0; display: flex; flex-direction: column; }
.ribbon { flex: none; height: 85px; display: flex; background: #f2f2f2; border-bottom: 1px solid #ddd; font-family: Roboto, sans-serif; }
.space { width: 112px; height: 62px; margin: 10px 4px 0 11px; gap: 7px; border: 2px solid #ddd; border-radius: 4px; font-weight: bold; }
.tools { flex: 1; }
.tabs { display: flex; gap: 23px; height: 24px; padding-left: 11px; font-size: 10px; line-height: 23px; }
.tabs a { padding: 0 12px; }
.tabs .on { color: #0696d7; border-bottom: 3px solid #0696d7; margin-right: -2px; }
.groups { display: flex; }
.group { display: flex; flex-direction: column; align-items: center; min-width: 79px; height: 52px; margin-top: 2px; padding: 0 10px; border-right: 2px solid #dedede; }
.group.last { border: 0; padding: 0 8px; min-width: 72px; }
.icons { display: flex; gap: 11px; }
.icons svg { width: 32px; height: 32px; }
.group button { gap: 3px; margin-top: 7px; line-height: 14px; }
.gfont { font: bold 13px "DejaVu Sans Mono", monospace; fill: #1b8be6; text-anchor: middle; }
.small { font-size: 11px; }

.canvas { flex: 1; position: relative; overflow: hidden; background: #fff; }
.scene { position: absolute; inset: 0; width: 100%; height: 100%; }
.minor { stroke: #e7e7e7; }
.major { stroke: #c8c8c8; }
#parts { fill: none; stroke: #060606; stroke-width: 1.5; }
.ax { font: 8px "Liberation Sans", sans-serif; }
.cubeax { font: 14px "Liberation Sans", sans-serif; }
.top { font: bold 14px "Liberation Sans", sans-serif; fill: #9a9da0; text-anchor: middle; }

.browser { position: absolute; left: 4px; top: 4px; width: 300px; }
.bar, .comments { display: flex; align-items: center; height: 25px; padding: 0 10px 0 4px; background: #f2f2f2; border: 1px solid #c4c4c4; font-family: Roboto, sans-serif; color: #666; }
.bar h2 { flex: 1; padding-left: 8px; }
.tree { padding: 3px 0 0 16px; }
.tree li { display: flex; align-items: center; height: 24px; }
.tg { width: 12px; height: 12px; margin-right: 8px; }
.l1 { margin-left: 18px; }
.l2 { margin-left: 36px; }
.l3 { margin-left: 54px; }
.it { display: flex; align-items: center; height: 20px; gap: 9px; padding: 0 10px 0 3px; background: #f2f2f2; }
.it svg { width: 16px; height: 16px; }
.it b { padding-left: 5px; font-weight: normal; line-height: 20px; white-space: nowrap; }
.setups { gap: 8px; }
.setups b { padding-left: 3px; }
.it .strong { font-weight: bold; }
.it .blue, .it .gray { margin-left: -3px; padding: 0 8px; font-weight: bold; }
.it .blue { background: #a9d0ff; color: #0a2f6e; }
.it .gray { margin-left: -7px; padding: 0 9px; background: #999; color: #fff; }
.it .rd { width: 14px; height: 14px; margin-left: -4px; }
.act { padding-right: 6px; }
.comments { position: absolute; left: 4px; bottom: 4px; width: 300px; padding-left: 24px; }
.comments h2 { flex: 1; }

.navbar { position: absolute; left: 549px; bottom: 6px; height: 24px; display: flex; padding: 0 4px 0 2px; background: #f2f2f2; }
.navbar button { gap: 2px; padding-right: 2px; margin-right: 1px; }
.navbar .plain { margin-right: 6px; }
.navbar button:first-child { margin-right: 3px; }
.navbar svg { width: 18px; height: 18px; }
.navbar .car { width: 8px; height: 8px; }

.dialog { position: absolute; right: 4px; top: 124px; width: 250px; background: #f2f2f2; border: 1px solid #c4c4c4; }
.dhead { display: flex; align-items: center; gap: 4px; height: 24px; padding: 0 5px 0 11px; border-bottom: 1px solid #c4c4c4; font-family: Roboto, sans-serif; color: #666; }
.dhead h2 { flex: 1; }
.dtabs { display: flex; height: 29px; padding-top: 3px; box-shadow: inset 0 -1px #c4c4c4; }
.dtabs button { width: 29px; border-right: 1px solid #c4c4c4; height: 25px; }
.dtabs svg { width: 18px; height: 18px; }
.dtabs .on { height: 26px; border: 1px solid #c4c4c4; border-bottom: 0; background: #f2f2f2; margin-left: -1px; }
.dialog section { margin: 0 13px 0 1px; padding: 4px 0 5px; border-bottom: 1px solid #c4c4c4; }
.dialog section:first-of-type { padding-top: 0; }
.dialog section:last-of-type { padding-bottom: 1px; border: 0; }
.dialog h3 { display: flex; align-items: center; gap: 5px; height: 30px; padding-left: 7px; font-weight: bold; }
.dialog h3 svg { width: 12px; height: 12px; }
.row { display: flex; align-items: center; height: 30px; padding-left: 11px; }
.row label { flex: none; width: 114px; white-space: nowrap; }
.row input[type=text] { width: 90px; height: 26px; padding: 0 3px; border: 1px solid #c4c4c4; background: #fff; font: inherit; color: #333; }
.row input[type=checkbox] { appearance: none; width: 14px; height: 14px; margin: 0 4px; border: 1px solid #555; border-radius: 3px; background: linear-gradient(#bbb, #eee); }
.row input[type=checkbox]:checked { background: url("data:image/svg+xml,%3Csvg xmlns='http://www.w3.org/2000/svg' viewBox='0 0 12 12'%3E%3Cpath d='M2 6l3 4 5-8' fill='none' stroke='%23111' stroke-width='1.600'/%3E%3C/svg%3E"), linear-gradient(#aaa, #eee); }
.pick { position: relative; margin-left: -1px; }
.pick select { appearance: none; display: block; width: 92px; height: 27px; padding: 0 0 0 23px; border: 1px solid #c8c8c8; border-radius: 2px; background: #fff; font: inherit; color: #333; }
.pick .pic { position: absolute; left: 4px; top: 6px; width: 16px; height: 16px; }
.pick .car { position: absolute; right: 5px; top: 10px; }
.pickbtn { width: 59px; height: 27px; gap: 4px; margin-left: -1px; border: 1px solid #d0d0d0; background: #fff; }
.pickbtn.on { background: #0696d7; border-color: #0696d7; color: #fff; }
.dfoot { display: flex; align-items: center; gap: 10px; height: 36px; padding: 0 11px 0 8px; border-top: 1px solid #c4c4c4; }
.dfoot svg { margin-right: auto; }
.dfoot button { width: 60px; height: 19px; border: 1px solid #b5b5b5; background: #ebebeb; color: #666; font-size: 12px; }
.badge { position: absolute; right: 12px; bottom: 9px; }
.mouse { position: absolute; right: 26px; top: 491px; }

.taskbar { flex: none; height: 40px; display: flex; background: linear-gradient(90deg, #2c2a2a, #232426 4%, #22262a 31%, #2d2b2a 33%, #3d3224 42%, #3d3224 46%, #30291f 54%, #292521 65%, #1f2122 85%, #1e1f21); }
.taskbar button { width: 49px; height: 40px; border-bottom: 3px solid transparent; }
.taskbar button svg { width: 24px; height: 24px; margin-top: 3px; }
.taskbar .run { border-color: #76b9ed; background-clip: padding-box; width: 41px; margin: 0 4px; }
.taskbar .cur { width: 49px; margin: 0; background: #555; }
.cricut { font: bold 7px "Liberation Sans", sans-serif; fill: #159a63; text-anchor: middle; }
.tray { margin-left: auto; display: flex; align-items: center; gap: 8px; padding-right: 25px; color: #fff; font: 11px/17px "Open Sans", sans-serif; text-align: center; }
.tray svg:first-child { margin-right: 4px; }
.tray time { margin-right: 10px; }
```

FILE: board.js
```js
const NS = 'http://www.w3.org/2000/svg';

function add(parent, cls, d) {
  const p = document.createElementNS(NS, 'path');
  if (cls) p.setAttribute('class', cls);
  p.setAttribute('d', d);
  parent.appendChild(p);
}

// Ground grid: every fifth line is a major one.
const grid = document.getElementById('grid');
for (const major of [false, true]) {
  for (let i = -45; i < 45; i++) {
    if ((i % 5 === 0) !== major) continue;
    const k = i / 5, cls = major ? 'major' : 'minor';
    add(grid, cls, `M${894 + k * 180.7} 140L${1180 + k * 181} 1040`);
    const y = 247 + k * 180.6;
    add(grid, cls, `M400 ${y + 165.6}L1920 ${y - 311}`);
  }
}

// Outlines on the sheet. A point is [x, y]; [x, y, n, dx, dy] runs a comb of
// n teeth from the previous point, each tooth offset by (dx, dy).
function outline(points, ox, oy) {
  const out = [];
  let prev = null;
  for (const [x, y, n, dx, dy] of points) {
    for (let i = 0; n && i < n; i++) {
      const at = t => [prev[0] + (x - prev[0]) * t / n, prev[1] + (y - prev[1]) * t / n];
      const h = at(i + 0.5), e = at(i + 1);
      out.push(h, [h[0] + dx, h[1] + dy], [e[0] + dx, e[1] + dy]);
      if (i < n - 1) out.push(e);
    }
    out.push([x, y]);
    prev = [x, y];
  }
  return 'M' + out.map(([x, y]) => `${(ox + x / 2.45).toFixed(1)} ${(oy + y / 3).toFixed(1)}`).join('L');
}
const closed = p => [...p, p[0]];
const shift = (p, x, y) => p.map(q => [q[0] + x, q[1] + y]);
const tall = (x, y) => closed([[x, y], [x + 15, y - 5], [x + 25, y + 36], [x + 10, y + 42]]);
const wide = (x, y) => closed([[x, y], [x + 34, y - 13], [x + 38, y + 3], [x + 4, y + 16]]);

const slotA = closed([[1268,1130],[1284,1121],[1280,1107],[1310,1094],[1315,1107],[1333,1104],[1292,1334],[1286,1318],[1271,1320],[1262,1281],[1275,1276],[1271,1262]]);
const slotB = closed([[1353,1108],[1368,1102],[1365,1087],[1396,1073],[1401,1087],[1418,1084],[1376,1312],[1370,1297],[1355,1299],[1346,1260],[1359,1255],[1355,1240]]);

const upper = [
  closed([[106,349],[561,175],[705,728],[251,901]]),
  closed([[612,160],[1256,-86],[1486,795],[842,1041]]),
  [[257,948],[398,1475,9,14,-6],[404,1503],[419,1498],[427,1530],[450,1522],[445,1491],[846,1337],[853,1365],[879,1357],[863,1297]],
  [[257,948],[726,770],[863,1297,9,14,-5]],
  tall(649,166), tall(680,283), tall(1243,67), tall(1393,635), tall(1423,753), tall(828,852), tall(858,969),
  wide(794,190), wide(1086,77), wide(1265,763), wide(974,874),
  closed([[757,321],[785,311],[789,326],[762,337]]), closed([[747,344],[762,338],[770,369],[755,375]]),
  closed([[1186,155],[1213,146],[1217,161],[1190,172]]), closed([[1217,161],[1232,157],[1240,188],[1226,194]]),
  closed([[1352,684],[1367,679],[1377,709],[1361,715]]), closed([[1335,727],[1361,715],[1365,731],[1339,742]]),
  closed([[884,863],[898,858],[907,890],[893,896]]), closed([[907,890],[933,880],[937,895],[912,907]]),
  closed([[1015,1011],[1498,825],[1646,1392],[1163,1575]]),
  [[1119,1040],[1425,923],[1533,1336,9,-13,5],[1541,1363],[1236,1481]],
  [[1119,1040],[1227,1455,9,12,-5],[1236,1481]],
  slotA, slotB,
  [[917,1060],[983,1036],[1123,1564,9,14,-5],[1138,1623],[1111,1634],[968,1095],[930,1108],[917,1060]],
  [[935,1196],[950,1190],[934,1130],[961,1123],[1098,1658],[1140,1646],[1154,1695],[1090,1717],[1083,1690],[1067,1693],[1060,1664]],
  [[935,1196],[1060,1664,8,14,-5]]
];
const lower = [
  closed([[829,357],[1313,172],[1460,738],[977,922]]),
  [[933,385],[1240,268],[1347,682,9,-13,5],[1355,709],[1049,826]],
  [[933,385],[1041,800,9,12,-5],[1049,826]],
  shift(slotA, -178, -646), shift(slotB, -181, -662),
  closed([[79,295],[564,110],[711,676],[228,859]]),
  [[184,323],[491,206],[598,620,9,-12,5],[606,647],[300,764]],
  [[184,323],[292,738,9,12,-5],[300,764]],
  closed([[292,314],[332,299],[434,690],[394,706]]),
  closed([[351,290],[391,275],[493,666],[453,682]]),
  closed([[417,271],[458,256],[560,647],[520,662]]),
  [[604,206],[619,199],[603,140],[629,130],[770,666],[810,653],[823,701],[758,726],[750,697],[735,702],[729,674]],
  [[604,206],[729,674,8,14,-5]],
  [[826,455],[801,464],[942,1003],[902,1018],[915,1067],[995,1037],[988,1009],[973,1013],[966,981]],
  [[826,455],[966,981,9,14,-5]],
  [[999,972],[1436,808,9,-5,-18],[1460,799],[1455,779],[1478,770],[1502,866],[1463,880],[1450,834],[1007,1001],[999,972]],
  [[1041,1124],[1478,956,9,-5,-18],[1502,948],[1497,928],[1520,919],[1511,891],[1068,1057],[1054,1012],[1015,1027],[1041,1124]],
  closed([[226,900],[238,893],[235,877],[263,866],[269,879],[292,874],[311,901],[313,867],[333,857],[330,840],[360,828],[365,843],[379,840],[379,942],[511,1327],[445,1350]]),
  closed([[394,820],[460,796],[680,1248],[668,1255],[671,1271],[643,1282],[636,1268],[615,1275],[595,1247],[593,1280],[573,1290],[575,1305],[546,1319],[541,1304],[527,1306],[527,1205]]),
  closed([[491,797],[503,790],[500,775],[528,763],[534,775],[556,770],[575,799],[577,762],[598,752],[596,738],[625,726],[630,742],[644,737],[644,843],[775,1225],[710,1248]]),
  closed([[650,717],[716,693],[937,1145],[924,1152],[928,1168],[900,1180],[893,1166],[872,1173],[851,1144],[849,1178],[830,1187],[832,1202],[803,1217],[798,1202],[784,1203],[784,1102]]),
  tall(309,925), tall(571,1187), tall(574,823), tall(828,1085)
];
const parts = document.getElementById('parts');
upper.forEach(p => add(parts, '', outline(p, 900, 140)));
lower.forEach(p => add(parts, '', outline(p, 1040, 560)));
```
